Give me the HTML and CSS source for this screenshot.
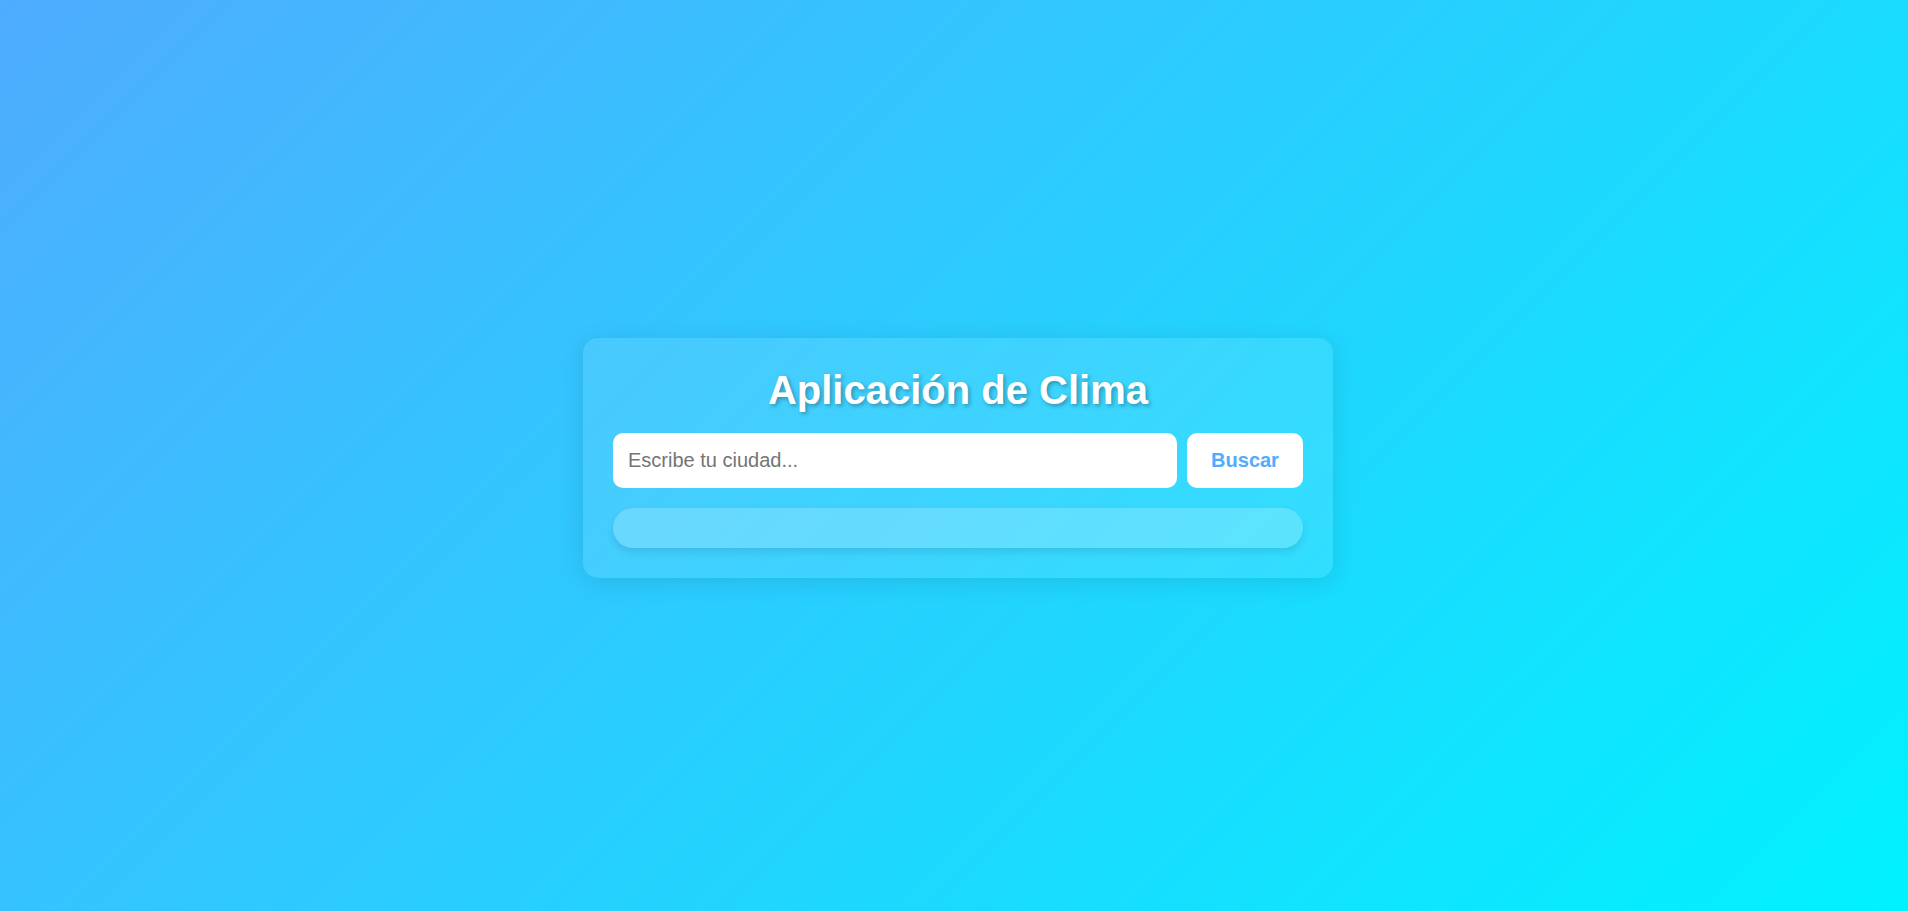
FILE: index.html
```html
<!DOCTYPE html>
<html lang="es">
<head>
<meta charset="utf-8">
<title>Aplicación de Clima</title>
<link rel="stylesheet" href="styles.css">
</head>
<body>
<main class="card">
  <h1 class="title">Aplicación de Clima</h1>
  <div class="search">
    <input class="city" type="text" placeholder="Escribe tu ciudad...">
    <button class="btn" type="button">Buscar</button>
  </div>
  <div class="result"></div>
</main>
</body>
</html>
```

FILE: styles.css
```css
* { box-sizing: border-box; }
html, body { margin: 0; padding: 0; }
body {
  height: 911px;
  padding: 4px 0 0 8px;
  background: linear-gradient(135deg, #4facfe 0%, #00f2fe 100%);
  font-family: "Liberation Sans", Arial, sans-serif;
  display: flex;
  align-items: center;
  justify-content: center;
}
.card {
  width: 750px;
  padding: 30px;
  border-radius: 15px;
  background: rgba(255, 255, 255, 0.1);
  box-shadow: 0 4px 24px rgba(0, 0, 0, 0.1);
  display: flex;
  flex-direction: column;
}
.title {
  margin: 0 0 20px;
  font-size: 40px;
  font-weight: bold;
  color: #fff;
  text-align: center;
  text-shadow: 2px 2px 4px rgba(0, 0, 0, 0.3);
}
.search {
  display: flex;
  gap: 10px;
  margin-bottom: 20px;
}
.city {
  flex: 1;
  min-width: 0;
  height: 55px;
  padding: 0 15px;
  border: none;
  border-radius: 10px;
  font-family: "Liberation Sans", Arial, sans-serif;
  font-size: 20px;
  color: #333;
  background: #fff;
  outline: none;
}
.city::placeholder { color: #757575; }
.btn {
  width: 116px;
  height: 55px;
  padding: 0;
  border: none;
  border-radius: 10px;
  background: #fff;
  color: #4facfe;
  font-family: "Liberation Sans", Arial, sans-serif;
  font-size: 20px;
  font-weight: bold;
  cursor: pointer;
}
.result {
  height: 40px;
  border-radius: 20px;
  background: rgba(255, 255, 255, 0.2);
  box-shadow: 0 4px 8px rgba(0, 0, 0, 0.1);
}
```
